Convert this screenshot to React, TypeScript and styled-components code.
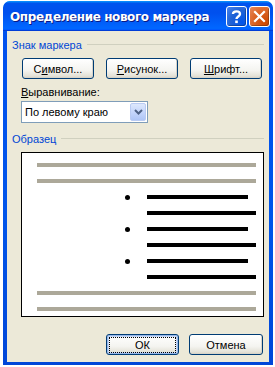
import React from 'react';
import styled, { createGlobalStyle } from 'styled-components';

const GlobalStyle = createGlobalStyle`
  html, body {
    margin: 0;
    padding: 0;
    background: #ffffff;
  }
  body {
    font-family: "Liberation Sans", Arial, sans-serif;
    font-size: 11px;
    color: #000;
  }
`;

const Page = styled.div`
  padding: 1px 2px 2px 3px;
  width: 275px;
  height: 367px;
  box-sizing: border-box;
`;

const Window = styled.div`
  width: 270px;
  height: 364px;
  display: flex;
  flex-direction: column;
  box-sizing: border-box;
  border-radius: 7px 7px 0 0;
  padding: 0 4px 3px 4px;
  background: linear-gradient(180deg, #0997ff, #0053ee 3%, #0050ee 10%, #0055ea 60%, #0046d8 100%);
  overflow: hidden;
`;

const TitleBar = styled.div`
  height: 30px;
  flex-shrink: 0;
  margin: 0 -4px;
  padding: 0 3px 0 7px;
  display: flex;
  align-items: center;
  border-radius: 7px 7px 0 0;
  background: linear-gradient(180deg, #0997ff, #0053ee 8%, #0050ee 40%, #06f 88%, #06f 93%, #005bff 95%, #003dd7 96%, #003dd7);
`;

const Title = styled.div`
  flex: 1;
  color: #fff;
  font-family: "DejaVu Sans", Verdana, sans-serif;
  font-weight: bold;
  font-size: 12px;
  letter-spacing: -0.4px;
  text-shadow: 1px 1px 0 #0a1883;
  white-space: nowrap;
  padding-top: 1px;
`;

const TitleButton = styled.div<{ $close?: boolean }>`
  width: 21px;
  height: 21px;
  margin-left: 2px;
  box-sizing: border-box;
  border: 1px solid #fff;
  border-radius: 3px;
  display: flex;
  align-items: center;
  justify-content: center;
  background: ${({ $close }) =>
    $close
      ? 'radial-gradient(circle at 80% 80%, #cc4600 0%, #dc6527 55%, #e5895d 100%)'
      : 'radial-gradient(circle at 80% 80%, #0054e9 0%, #2263d5 55%, #4985f0 100%)'};
  box-shadow: inset -1px -1px 0 rgba(0, 0, 0, 0.25);
`;

const Body = styled.div`
  flex: 1;
  background: #ece9d8;
  display: flex;
  flex-direction: column;
  padding: 0 5px 0 5px;
`;

const GroupHeader = styled.div<{ $top: number }>`
  display: flex;
  align-items: center;
  margin-top: ${({ $top }) => $top}px;
  height: 13px;
  color: #0046d5;
  white-space: nowrap;

  &::after {
    content: '';
    flex: 1;
    height: 1px;
    margin-left: 5px;
    background: #d0d0bf;
  }
`;

const Indent = styled.div`
  padding-left: 9px;
  display: flex;
  flex-direction: column;
`;

const ButtonRow = styled.div`
  display: flex;
  gap: 12px;
  margin-top: 7px;
  padding-left: 1px;
`;

const Button = styled.button<{ $default?: boolean; $width?: number }>`
  width: ${({ $width }) => $width ?? 72}px;
  height: 21px;
  padding: 0;
  box-sizing: border-box;
  border: 1px solid #003c74;
  border-radius: 3px;
  font-family: "Liberation Sans", Arial, sans-serif;
  font-size: 11px;
  color: #000;
  background: linear-gradient(180deg, #fff, #f4f4f0 60%, #e3e1d6 90%, #d6d0c5);
  box-shadow: ${({ $default }) =>
    $default ? 'inset 0 0 0 1px #98b8ea, inset 0 0 0 2px #c9d9f5' : 'inset -1px -1px 0 #d8d4c8'};
  display: flex;
  align-items: center;
  justify-content: center;
`;

const FocusRing = styled.span`
  padding: 1px 25px;
  border: 1px dotted #000;
`;

const Key = styled.span`
  text-decoration: underline;
`;

const FieldLabel = styled.div`
  margin-top: 7px;
  height: 13px;
  line-height: 13px;
`;

const Select = styled.div`
  margin-top: 2px;
  width: 127px;
  height: 22px;
  box-sizing: border-box;
  border: 1px solid #7f9db9;
  background: #fff;
  display: flex;
  align-items: center;
  padding: 1px;
`;

const SelectText = styled.span`
  flex: 1;
  padding-left: 2px;
  white-space: nowrap;
`;

const SelectArrow = styled.div`
  width: 16px;
  height: 18px;
  box-sizing: border-box;
  border: 1px solid #b9cbf3;
  border-radius: 2px;
  background: linear-gradient(180deg, #dde8fd, #c1d3fb 60%, #aec5f6);
  display: flex;
  align-items: center;
  justify-content: center;
`;

const Preview = styled.div`
  margin-top: 7px;
  width: 243px;
  height: 165px;
  box-sizing: border-box;
  border: 1px solid #000;
  background: #fff;
  padding-top: 10px;
  display: flex;
  flex-direction: column;
  gap: 12px;
`;

const Row = styled.div`
  height: 4px;
  display: flex;
  align-items: center;
`;

const Bar = styled.div<{ $offset: number; $width: number; $grey?: boolean }>`
  margin-left: ${({ $offset }) => $offset}px;
  width: ${({ $width }) => $width}px;
  height: 4px;
  background: ${({ $grey }) => ($grey ? '#aca899' : '#000')};
`;

const Dot = styled.span`
  margin-left: 103px;
  width: 5px;
  height: 5px;
  border-radius: 50%;
  background: #000;
  flex-shrink: 0;
`;

const Footer = styled.div`
  margin-top: 17px;
  display: flex;
  justify-content: flex-end;
  gap: 10px;
  padding-right: 1px;
`;

const App = () => {
  const bullets = [0, 1, 2];
  return (
    <Page>
      <GlobalStyle />
      <Window>
        <TitleBar>
          <Title>Определение нового маркера</Title>
          <TitleButton>
            <svg width="13" height="15" viewBox="0 0 13 15">
              <path d="M3 5 C3 1.5 10 1.5 10 5 C10 7.5 6.5 7.5 6.5 10" fill="none" stroke="#fff" strokeWidth="2.4" />
              <rect x="5.2" y="11.5" width="2.6" height="2.6" fill="#fff" />
            </svg>
          </TitleButton>
          <TitleButton $close>
            <svg width="13" height="13" viewBox="0 0 13 13">
              <path d="M2 2 L11 11 M11 2 L2 11" stroke="#fff" strokeWidth="2.2" strokeLinecap="square" />
            </svg>
          </TitleButton>
        </TitleBar>
        <Body>
          <GroupHeader $top={7}>Знак маркера</GroupHeader>
          <Indent>
            <ButtonRow>
              <Button>С<Key>и</Key>мвол...</Button>
              <Button><Key>Р</Key>исунок...</Button>
              <Button><Key>Ш</Key>рифт...</Button>
            </ButtonRow>
            <FieldLabel><Key>В</Key>ыравнивание:</FieldLabel>
            <Select>
              <SelectText>По левому краю</SelectText>
              <SelectArrow>
                <svg width="9" height="6" viewBox="0 0 9 6">
                  <path d="M1 1 L4.5 4.5 L8 1" fill="none" stroke="#4d6185" strokeWidth="2" />
                </svg>
              </SelectArrow>
            </Select>
          </Indent>
          <GroupHeader $top={9}>Образец</GroupHeader>
          <Indent>
            <Preview>
              <Row><Bar $grey $offset={15} $width={219} /></Row>
              <Row><Bar $grey $offset={15} $width={219} /></Row>
              {bullets.map((b) => (
                <React.Fragment key={b}>
                  <Row>
                    <Dot />
                    <Bar $offset={17} $width={101} />
                  </Row>
                  <Row><Bar $offset={125} $width={109} /></Row>
                </React.Fragment>
              ))}
              <Row><Bar $grey $offset={15} $width={219} /></Row>
              <Row><Bar $grey $offset={15} $width={219} /></Row>
            </Preview>
          </Indent>
          <Footer>
            <Button $default $width={73}><FocusRing>ОК</FocusRing></Button>
            <Button $width={74}>Отмена</Button>
          </Footer>
        </Body>
      </Window>
    </Page>
  );
};

export default App;
